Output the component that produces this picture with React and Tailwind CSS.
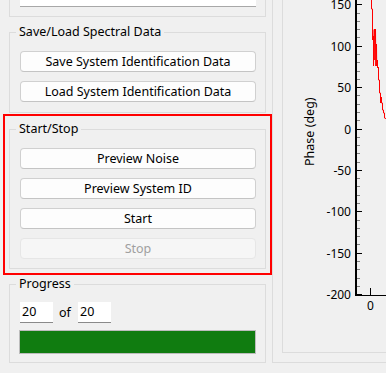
import React from "react";

const btn =
  "h-[21px] w-[236px] rounded-[4px] border border-[#d0d0d0] border-b-[#c4c4c4] bg-[#fdfdfd] text-[12.5px] leading-[19px] text-black flex items-center justify-center";
const btnDisabled =
  "h-[21px] w-[236px] rounded-[4px] border border-[#e6e6e6] bg-[#f6f6f6] text-[12.5px] leading-[19px] text-[#a0a0a0] flex items-center justify-center";

function Group({ title, className = "", children }) {
  return (
    <fieldset className={"ml-[9px] w-[257px] border border-[#dcdcdc] " + className}>
      <legend className="ml-[6px] px-[3px] text-[12.5px] leading-[16px] text-black">{title}</legend>
      {children}
    </fieldset>
  );
}

function Plot() {
  const yOf = (v) => Math.round(128.5 - 0.828 * v);
  const majors = [150, 100, 50, 0, -50, -100, -150, -200];
  const minors = [];
  for (let v = -190; v <= 160; v += 10) {
    if (v % 50 !== 0) minors.push(v);
  }
  const pts = [
    [371.5, 0], [371.5, 9], [372.5, 9], [372.5, 40], [373.5, 36], [373.5, 66],
    [374, 30], [374.5, 29], [374.8, 60], [375.5, 29], [375.8, 66], [376.5, 44],
    [376.7, 66], [377.5, 60], [377.5, 68], [378.5, 67], [378.5, 80], [379.5, 80],
    [379.5, 93], [380.5, 93], [380.5, 103], [381.5, 97], [381.5, 103], [382.5, 103],
    [382.5, 110], [383.5, 110], [383.5, 113], [384.5, 113], [384.5, 118], [387, 119],
  ];
  return (
    <svg width="120" height="352" viewBox="283 0 120 352" className="block">
      {minors.map((v) => (
        <line key={"m" + v} x1="357" x2="360" y1={yOf(v) + 0.5} y2={yOf(v) + 0.5} stroke="#808080" strokeWidth="1" />
      ))}
      {majors.map((v) => (
        <line key={"M" + v} x1="357" x2="362" y1={yOf(v) + 0.5} y2={yOf(v) + 0.5} stroke="#000" strokeWidth="1" />
      ))}
      {majors.map((v) => (
        <text
          key={"t" + v}
          x="351"
          y={yOf(v) + 5}
          textAnchor="end"
          fontSize="12"
          fontFamily="'Noto Sans', sans-serif"
          fill="#000"
        >
          {v}
        </text>
      ))}
      <rect x="355" y="0" width="2" height="296" fill="#000" />
      <rect x="355" y="295" width="40" height="1" fill="#000" />
      <rect x="355" y="294" width="7" height="1" fill="#000" />
      <line x1="370.5" x2="370.5" y1="288" y2="295" stroke="#000" strokeWidth="1" />
      <text x="370.5" y="310" textAnchor="middle" fontSize="12" fontFamily="'Noto Sans', sans-serif" fill="#000">
        0
      </text>
      <text
        x="0"
        y="0"
        transform="translate(313.5,131.7) rotate(-90)"
        textAnchor="middle"
        fontSize="12.5"
        fontFamily="'Noto Sans', sans-serif"
        fill="#000"
      >
        Phase (deg)
      </text>
      <polyline points={pts.map((p) => p.join(",")).join(" ")} fill="none" stroke="#ff0000" strokeWidth="1" />
    </svg>
  );
}

export default function App() {
  return (
    <div className="w-[386px] h-[373px] overflow-hidden bg-[#f0f0f0] flex font-['Noto_Sans',sans-serif] text-[12px] text-black">
      <div className="w-[272px] shrink-0 flex flex-col">
        <div className="ml-[9px] w-[257px] h-[17px] border-x border-b border-[#dcdcdc] pl-[10px]">
          <div className="w-[236px] h-[7px] bg-white border-b border-[#a8a8a8]" />
        </div>

        <Group title="Save/Load Spectral Data" className="mt-[7px]">
          <div className="pl-[10px] pr-[9px] pt-[11px] pb-[10px] flex flex-col gap-[9px]">
            <button className={btn}>Save System Identification Data</button>
            <button className={btn}>Load System Identification Data</button>
          </div>
        </Group>

        <div className="ml-[3px] w-[269px] mt-[1px] border-2 border-[#ff0000] pt-[5px] pb-[4px] pl-[4px]">
          <fieldset className="w-[257px] border border-[#dcdcdc]">
            <legend className="ml-[6px] px-[3px] text-[12.5px] leading-[16px] text-black">Start/Stop</legend>
            <div className="pl-[10px] pr-[9px] pt-[11px] pb-[9px] flex flex-col gap-[9px]">
              <button className={btn}>Preview Noise</button>
              <button className={btn}>Preview System ID</button>
              <button className={btn}>Start</button>
              <button className={btnDisabled} disabled>
                Stop
              </button>
            </div>
          </fieldset>
        </div>

        <Group title="Progress" className="mt-[1px]">
          <div className="pl-[9px] pr-[9px] pt-[10px] pb-[8px] flex flex-col gap-[7px]">
            <div className="flex items-center ml-[1px]">
              <div className="w-[33px] h-[21px] bg-white border-b border-[#8a8a8a] pl-[2px] text-[12.5px] leading-[20px]">20</div>
              <span className="ml-[6px] w-[19px] text-[12.5px] leading-[16px]">of</span>
              <div className="w-[33px] h-[21px] bg-white border-b border-[#8a8a8a] pl-[2px] text-[12.5px] leading-[20px]">20</div>
            </div>
            <div className="w-[237px] h-[24px] border border-[#bcbcbc] bg-[#107c10]" />
          </div>
        </Group>
      </div>

      <div className="w-[200px] shrink-0 h-[363px] border-l border-b border-[#dcdcdc] pl-[9px] pb-[9px]">
        <div className="h-full border-l border-b border-[#dcdcdc] overflow-hidden">
          <Plot />
        </div>
      </div>
    </div>
  );
}
